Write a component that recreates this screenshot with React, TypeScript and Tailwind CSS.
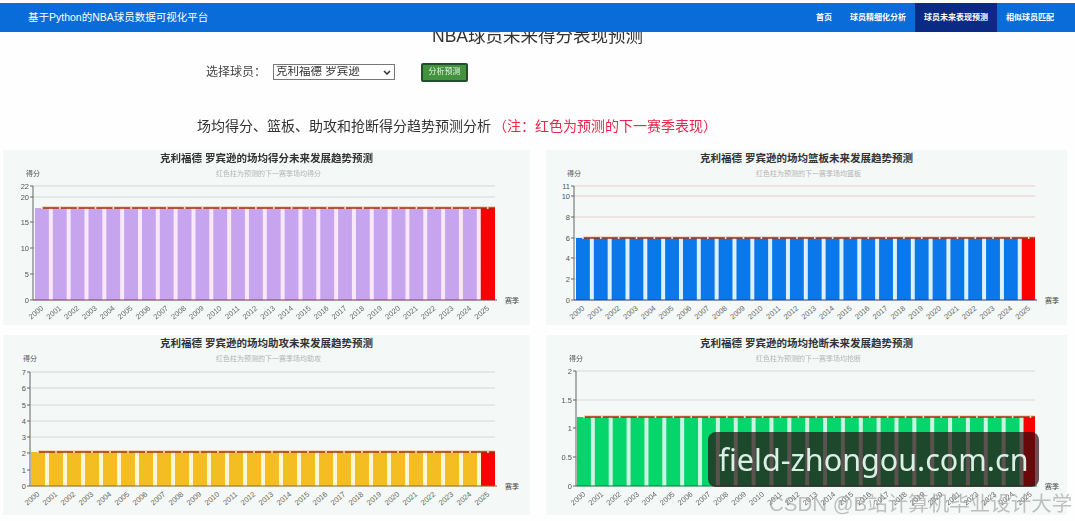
const years = Array.from({ length: 26 }, (_, i) => 2000 + i);

type ChartProps = {
  name: string;
  sub: string;
  width: number;
  height: number;
  axisX: number;
  firstBar: number;
  step: number;
  end: number;
  plotTop: number;
  plotBottom: number;
  barTop: number;
  ticks: [string, number][];
  color: string;
  tint: string;
  grid: string;
  axisColor: string;
};

function Chart(p: ChartProps) {
  const top = 16;
  return (
    <div className="flex flex-col bg-[#f4f8f6]" style={{ height: p.height }}>
      <div className="h-4 pt-px text-center text-[10.5px] leading-[15px] font-bold text-[#333]">
        克利福德 罗宾逊的场均{p.name}未来发展趋势预测
      </div>
      <svg width={p.width} height={p.height - top} className="block">
        <text x={p.width / 2 + 2} y="10" textAnchor="middle" fontSize="7" fill="#b5b5b5">
          红色柱为预测的下一赛季场均{p.sub}
        </text>
        <text x={p.axisX - 7} y="10" fontSize="7" fill="#555">得分</text>
        {p.ticks.map(([label, y]) => (
          <g key={label}>
            <line x1={p.axisX} x2={p.end} y1={y - top} y2={y - top} stroke={p.grid} />
            <line x1={p.axisX - 3} x2={p.axisX} y1={y - top} y2={y - top} stroke="#666" />
            <text x={p.axisX - 4} y={y - top + 3} textAnchor="end" fontSize="7.5" fill="#555">{label}</text>
          </g>
        ))}
        <rect x={p.firstBar} y={p.barTop - top} width={p.step * 25} height={p.plotBottom - p.barTop} fill={p.tint} />
        {years.map((year, i) => {
          const x = p.firstBar + i * p.step;
          return (
            <g key={year}>
              <rect
                x={x}
                y={p.barTop - top}
                width={i === 25 ? p.end - x : p.step - 4}
                height={p.plotBottom - p.barTop}
                fill={i === 25 ? "#fb0000" : p.color}
              />
              <text
                x={x + 9}
                y={p.plotBottom - top + 9}
                textAnchor="end"
                fontSize="7.5"
                fill="#666"
                transform={`rotate(-40 ${x + 9} ${p.plotBottom - top + 9})`}
              >
                {year}
              </text>
            </g>
          );
        })}
        <line x1={p.firstBar + 7} x2={p.end} y1={p.barTop - top - 1} y2={p.barTop - top - 1} stroke="#f3b784" />
        <line x1={p.firstBar + 7} x2={p.end} y1={p.barTop - top} y2={p.barTop - top} stroke="#a32c12" strokeWidth="1.6" />
        {years.map((year, i) => (
          <circle key={year} cx={p.firstBar + 7 + i * p.step} cy={p.barTop - top} r="1" fill="#f6e7d8" />
        ))}
        <line x1={p.axisX} x2={p.axisX} y1={p.plotTop - top} y2={p.plotBottom - top} stroke="#666" />
        <line x1={p.axisX} x2={p.end + 2} y1={p.plotBottom - top} y2={p.plotBottom - top} stroke={p.axisColor} />
        <text x={p.end + 10} y={p.plotBottom - top + 3} fontSize="7" fill="#444">赛季</text>
      </svg>
    </div>
  );
}

export default function App() {
  return (
    <div
      className="relative h-[521px] w-[1075px] overflow-hidden bg-[#fdfefd] pt-[3px]"
      style={{ fontFamily: '"Liberation Sans", "Noto Sans CJK SC", sans-serif' }}
    >
      <div className="blur-[0.5px]">
        {/* Top nav */}
        <div className="relative z-10 flex h-[29px] items-center justify-between bg-[#0a6cd8] pl-7 pr-3 text-white">
          <div className="text-[10.5px]">基于Python的NBA球员数据可视化平台</div>
          <div className="flex h-full items-center text-[8px] font-bold">
            <a className="px-[9px]">首页</a>
            <a className="px-[9px]">球员精细化分析</a>
            <a className="flex h-full items-center bg-[#0a2a86] px-[9px]">球员未来表现预测</a>
            <a className="px-[9px]">相似球员匹配</a>
          </div>
        </div>

        <h1 className="-mt-2 h-6 text-center text-[17.5px] leading-6 font-normal text-[#333]">NBA球员未来得分表现预测</h1>

        <div className="mt-[15px] flex h-[18px] items-center pl-[206px]">
          <span className="w-[67px] text-[12px] text-[#444]">选择球员：</span>
          <div className="relative h-[16px] w-[122px]">
            <select className="block h-full w-full appearance-none border border-[#777] bg-white pl-[2px] text-[11.5px] leading-none text-[#333]">
              <option>克利福德 罗宾逊</option>
            </select>
            <svg width="8" height="5" viewBox="0 0 8 5" className="absolute top-[6px] right-[4px]">
              <path d="M1 1l3 3 3-3" fill="none" stroke="#333" strokeWidth="1.5" />
            </svg>
          </div>
          <button className="ml-[26px] h-[19px] w-[47px] rounded-[2px] border-2 border-[#1f4f2b] bg-[#43923f] text-[8px] text-[#e4f5de]">
            分析预测
          </button>
        </div>

        <div className="mt-[35px] h-5 pl-[197px] text-[14px] leading-5 text-[#333]">
          场均得分、篮板、助攻和抢断得分趋势预测分析
          <span className="ml-[2px] text-[#e8274b]">（注：红色为预测的下一赛季表现）</span>
        </div>

        <div className="mt-[14px] grid grid-cols-[527px_521px] gap-x-4 gap-y-[10px] pl-[3px]">
          <Chart
            name="得分"
            sub="得分"
            width={527}
            height={175}
            axisX={30}
            firstBar={32}
            step={17.83}
            end={492}
            plotTop={36}
            plotBottom={150}
            barTop={58}
            ticks={[["22", 36], ["20", 47], ["15", 72], ["10", 98], ["5", 124], ["0", 150]]}
            color="#c6a5ee"
            tint="#f9e8fa"
            grid="#d9d5da"
            axisColor="#7a3f55"
          />
          <Chart
            name="篮板"
            sub="篮板"
            width={521}
            height={175}
            axisX={28}
            firstBar={30}
            step={17.83}
            end={489}
            plotTop={36}
            plotBottom={150}
            barTop={88}
            ticks={[["11", 36], ["10", 46], ["8", 67], ["6", 88], ["4", 108], ["2", 129], ["0", 150]]}
            color="#0a78ea"
            tint="#dcf1fc"
            grid="#e6cfcf"
            axisColor="#27408b"
          />
          <Chart
            name="助攻"
            sub="助攻"
            width={527}
            height={180}
            axisX={27}
            firstBar={28}
            step={18}
            end={492}
            plotTop={37}
            plotBottom={151}
            barTop={117}
            ticks={[["7", 37], ["6", 53], ["5", 70], ["4", 86], ["3", 102], ["2", 118], ["1", 135], ["0", 151]]}
            color="#f4bd22"
            tint="#fdf6d6"
            grid="#d8d6da"
            axisColor="#8a6a20"
          />
          <Chart
            name="抢断"
            sub="抢断"
            width={521}
            height={180}
            axisX={30}
            firstBar={31}
            step={17.86}
            end={489}
            plotTop={36}
            plotBottom={151}
            barTop={82}
            ticks={[["2", 36], ["1.5", 65], ["1", 93], ["0.5", 122], ["0", 151]]}
            color="#05d66b"
            tint="#cff3e2"
            grid="#d8dada"
            axisColor="#0c7a44"
          />
        </div>
      </div>

      {/* Watermarks */}
      <div className="absolute top-[490px] left-[769px] text-[20.5px] leading-[28px] whitespace-nowrap text-[#9a9a9a]/60">
        CSDN @B站计算机毕业设计大学
      </div>
      <div
        className="absolute top-[432px] left-[708px] flex h-[55px] w-[331px] items-center justify-center rounded-lg bg-[#2a0c10]/70 text-[30.5px] text-[#dcefe6]"
        style={{ fontFamily: '"Noto Sans", sans-serif' }}
      >
        field-zhongou.com.cn
      </div>
    </div>
  );
}
